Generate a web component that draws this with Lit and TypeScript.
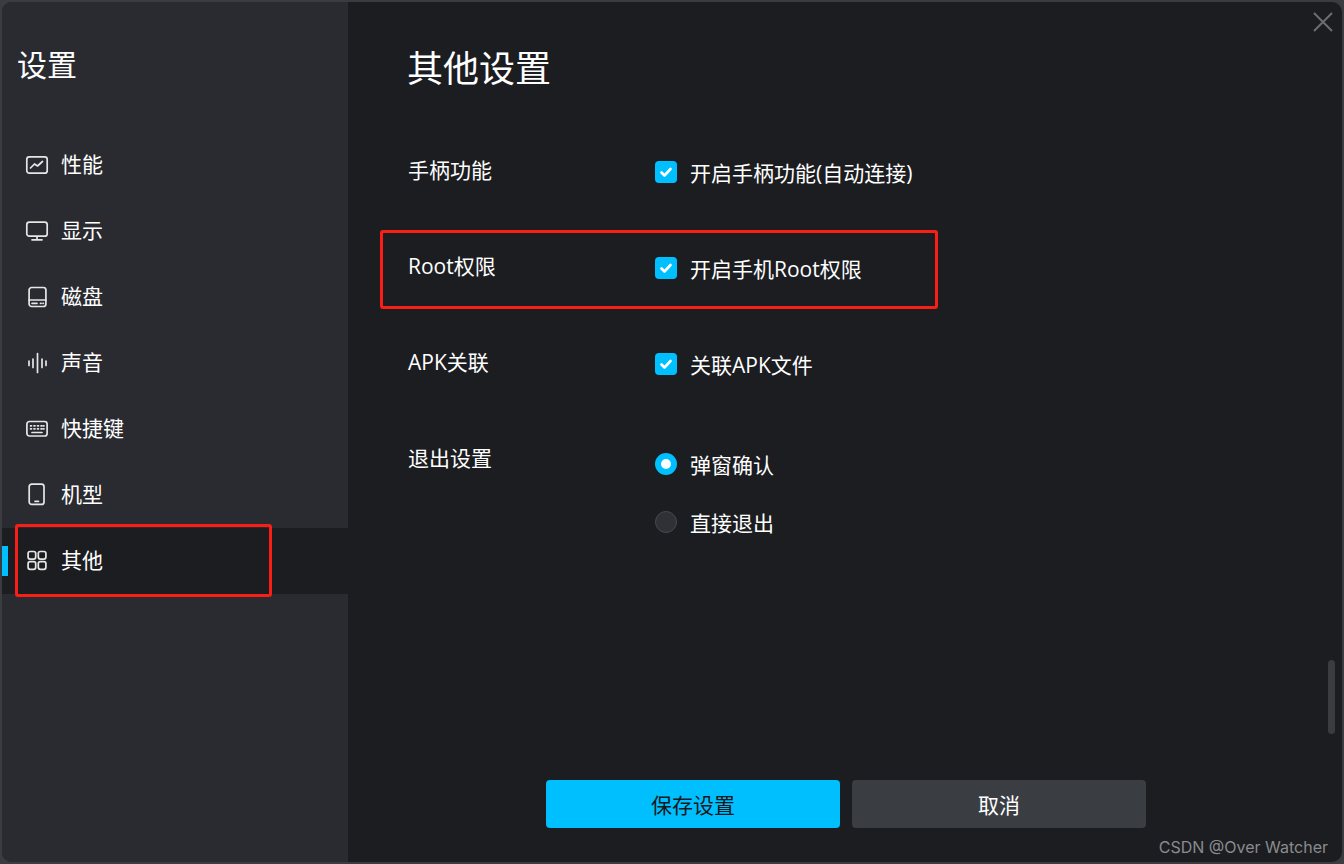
import { LitElement, html, css, svg } from 'lit';
import { customElement } from 'lit/decorators.js';

const ICONS: Record<string, unknown> = {
  perf: svg`<rect x="1.8" y="3.800" width="20.400" height="16.400" rx="2.500"/><path d="M5.500 15l4-4 3 2 5-4.500"/>`,
  display: svg`<rect x="1.800" y="3.200" width="20.400" height="14" rx="2.500"/><path d="M12 17.500v3.300M7 20.800h10"/>`,
  disk: svg`<rect x="4.100" y="2.500" width="16.800" height="19" rx="2.500"/><path d="M4.100 15h16.800M7 18.300h5M15.500 18.300h.6M18 18.300h.4"/>`,
  sound: svg`<path d="M4 10v4.500M8 8v8.500M12.500 2.500v19M17 8v8.500M21 10v4.500"/>`,
  keys: svg`<rect x="1.900" y="4.500" width="20.200" height="14.500" rx="2.500"/><path d="M5.500 8.800h1M9 8.800h1M12.500 8.800h1M16 8.800h1M18.500 8.800h.5M5.500 11.800h1M9 11.800h1M12.500 11.800h1M16 11.800h1M18.500 11.800h.5M7 15.500h10"/>`,
  phone: svg`<rect x="4.200" y="1.100" width="14.800" height="20.300" rx="2.500"/><path d="M10 18.300h3.500"/>`,
  other: svg`<rect x="3.100" y="2.500" width="7.600" height="7.600" rx="2"/><rect x="13.300" y="2.500" width="7.600" height="7.600" rx="2"/><rect x="3.100" y="12.700" width="7.600" height="7.600" rx="2"/><rect x="13.300" y="12.700" width="7.600" height="7.600" rx="2"/>`,
};

const NAV = [
  { icon: 'perf', label: '性能' },
  { icon: 'display', label: '显示' },
  { icon: 'disk', label: '磁盘' },
  { icon: 'sound', label: '声音' },
  { icon: 'keys', label: '快捷键' },
  { icon: 'phone', label: '机型' },
  { icon: 'other', label: '其他', active: true },
];

const CHECK_ROWS = [
  { label: '手柄功能', text: '开启手柄功能(自动连接)' },
  { label: 'Root权限', text: '开启手机Root权限' },
  { label: 'APK关联', text: '关联APK文件' },
];

@customElement('app-root')
export class AppRoot extends LitElement {
  static styles = css`
    :host {
      display: block;
      width: 1344px;
      height: 864px;
      background: #3a3c40;
      font-family: 'Open Sans', 'Noto Sans CJK SC', sans-serif;
      font-size: 21px;
      color: #fff;
    }
    .window {
      position: relative;
      box-sizing: border-box;
      width: 1344px;
      height: 864px;
      display: flex;
      border: 2px solid #3a3c40;
      border-radius: 12px;
      overflow: hidden;
      background: #1c1d21;
    }
    .sidebar {
      flex: 0 0 346px;
      background: #2a2b31;
    }
    .sidebar h1 {
      margin: 0;
      padding: 42px 0 0 15px;
      height: 45px;
      font-size: 30px;
      line-height: 42px;
      font-weight: 400;
    }
    .nav {
      margin-top: 43px;
    }
    .nav-item {
      position: relative;
      height: 66px;
      display: flex;
      align-items: center;
      padding-left: 23px;
      gap: 12px;
    }
    .nav-item span {
      padding-bottom: 4px;
    }
    .nav-item.active {
      background: #1c1d21;
    }
    .nav-item.active::before {
      content: '';
      position: absolute;
      left: 0;
      top: 18px;
      width: 6px;
      height: 30px;
      background: #00bfff;
    }
    .nav-item svg {
      width: 24px;
      height: 24px;
      fill: none;
      stroke: #e6e6e6;
      stroke-width: 1.7;
      stroke-linecap: round;
      stroke-linejoin: round;
    }
    .main {
      flex: 1;
      display: flex;
      flex-direction: column;
      padding-left: 60px;
    }
    .main h2 {
      margin: 0 0 0 -1px;
      padding-top: 41px;
      font-size: 36px;
      line-height: 52px;
      font-weight: 400;
    }
    .rows {
      margin-top: 60px;
      display: flex;
      flex-direction: column;
      gap: 66px;
    }
    .row {
      display: flex;
      align-items: flex-start;
      height: 30px;
    }
    .row-label {
      flex: 0 0 247px;
      line-height: 30px;
    }
    .options {
      display: flex;
      flex-direction: column;
      gap: 28px;
      padding-top: 2px;
    }
    .opt {
      display: flex;
      align-items: center;
      gap: 13px;
      height: 30px;
      line-height: 30px;
    }
    .opt-text {
      padding-top: 1px;
    }
    .box {
      width: 22px;
      height: 22px;
      border-radius: 4px;
      background: #00bfff;
      display: flex;
      align-items: center;
      justify-content: center;
    }
    .box svg {
      width: 14px;
      height: 14px;
      fill: none;
      stroke: #fff;
      stroke-width: 2.6;
      stroke-linecap: round;
      stroke-linejoin: round;
    }
    .radio {
      box-sizing: border-box;
      width: 22px;
      height: 22px;
      border-radius: 50%;
      background: #303136;
      border: 1px solid #48494e;
    }
    .radio.on {
      border: 6px solid #00bfff;
      background: #fff;
    }
    .radio-options {
      padding-top: 6px;
    }
    .actions {
      margin: auto 0 34px -58px;
      display: flex;
      justify-content: center;
      gap: 12px;
    }
    .btn {
      width: 294px;
      height: 48px;
      display: flex;
      align-items: center;
      justify-content: center;
      border-radius: 4px;
      color: #16171a;
      background: #00bfff;
    }
    .btn.cancel {
      background: #3a3e42;
      color: #fff;
    }
    .close {
      position: absolute;
      top: 10px;
      right: 9px;
      width: 20px;
      height: 20px;
      fill: none;
      stroke: #6c6d70;
      stroke-width: 2;
    }
    .scroll-thumb {
      position: absolute;
      left: 1326px;
      top: 658px;
      width: 7px;
      height: 74px;
      border-radius: 4px;
      background: #3a3c40;
    }
    .mark {
      position: absolute;
      box-sizing: border-box;
      border: 3px solid #fb1e16;
      border-radius: 3px;
    }
    .mark.nav-mark {
      left: 13px;
      top: 522px;
      width: 257px;
      height: 73px;
    }
    .mark.root-mark {
      left: 378px;
      top: 228px;
      width: 558px;
      height: 79px;
    }
    .watermark {
      position: absolute;
      right: 14px;
      bottom: 5px;
      font-family: 'Inter', sans-serif;
      font-size: 16px;
      line-height: 20px;
      color: #8a8b8d;
    }
  `;

  render() {
    return html`
      <div class="window">
        <aside class="sidebar">
          <h1>设置</h1>
          <div class="nav">
            ${NAV.map(
              (item) => html`
                <div class="nav-item ${item.active ? 'active' : ''}">
                  <svg viewBox="0 0 24 24">${ICONS[item.icon]}</svg>
                  <span>${item.label}</span>
                </div>
              `
            )}
          </div>
        </aside>
        <section class="main">
          <h2>其他设置</h2>
          <div class="rows">
            ${CHECK_ROWS.map(
              (row) => html`
                <div class="row">
                  <div class="row-label">${row.label}</div>
                  <div class="options">
                    <div class="opt">
                      <span class="box">
                        <svg viewBox="0 0 14 14"><path d="M2.500 7.500l3 3 6-6.500" /></svg>
                      </span>
                      <span class="opt-text">${row.text}</span>
                    </div>
                  </div>
                </div>
              `
            )}
            <div class="row">
              <div class="row-label">退出设置</div>
              <div class="options radio-options">
                <div class="opt"><span class="radio on"></span><span class="opt-text">弹窗确认</span></div>
                <div class="opt"><span class="radio"></span><span class="opt-text">直接退出</span></div>
              </div>
            </div>
          </div>
          <div class="actions">
            <div class="btn">保存设置</div>
            <div class="btn cancel">取消</div>
          </div>
        </section>
        <svg class="close" viewBox="0 0 20 20"><path d="M1 1l18 18M19 1L1 19" /></svg>
        <div class="scroll-thumb"></div>
        <div class="mark nav-mark"></div>
        <div class="mark root-mark"></div>
        <div class="watermark">CSDN @Over Watcher</div>
      </div>
    `;
  }
}
